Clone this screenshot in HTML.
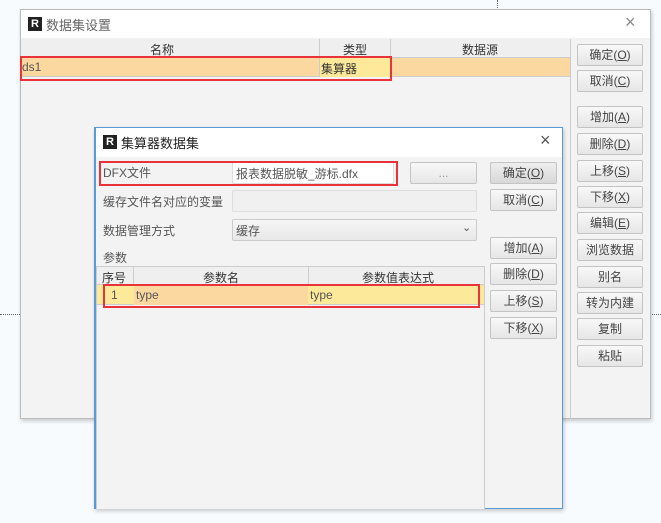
<!DOCTYPE html>
<html><head><meta charset="utf-8"><style>
*{margin:0;padding:0;box-sizing:border-box}
body{width:661px;height:523px;background:#f7fbfd;position:relative;overflow:hidden;font-family:"Liberation Sans","Noto Sans CJK SC",sans-serif;font-size:12px;color:#333}
.a{position:absolute}
.btn{position:absolute;height:22px;border:1px solid #c4c4c4;border-radius:2px;background:linear-gradient(#f8f8f8,#e6e6e6);text-align:center;line-height:20px;font-size:12px;color:#444}
.ic{position:absolute;width:14px;height:14px;background:#222;color:#fff;font-size:11px;font-weight:bold;line-height:14px;text-align:center}
</style></head><body>
<div class="a" style="left:0;top:314px;width:20px;border-top:1px dotted #666"></div>
<div class="a" style="left:650px;top:314px;width:11px;border-top:1px dotted #666"></div>
<div class="a" style="left:497px;top:0;height:10px;border-left:1px dotted #666"></div>

<!-- outer dialog -->
<div class="a" style="left:20px;top:9px;width:631px;height:410px;background:#f3f3f3;border:1px solid #bbb;box-shadow:1px 2px 4px rgba(0,0,0,.2)"></div>
<div class="a" style="left:21px;top:10px;width:629px;height:28px;background:#fff"></div>
<div class="ic" style="left:28px;top:17px">R</div>
<div class="a" style="left:46px;top:15px;font-size:13px;color:#666">数据集设置</div>
<div class="a" style="left:625px;top:12px;font-size:18px;color:#888">×</div>
<div class="a" style="left:21px;top:39px;width:549px;height:19px;background:#efefef;border-bottom:1px solid #ccc"></div>
<div class="a" style="left:319px;top:39px;height:19px;border-left:1px solid #ccc"></div>
<div class="a" style="left:390px;top:39px;height:19px;border-left:1px solid #ccc"></div>
<div class="a" style="left:150px;top:41px">名称</div>
<div class="a" style="left:343px;top:41px">类型</div>
<div class="a" style="left:462px;top:41px">数据源</div>
<div class="a" style="left:570px;top:39px;height:380px;border-left:1px solid #ccc"></div>
<div class="a" style="left:21px;top:58px;width:549px;height:19px;background:#fbd8a0;border-bottom:1px solid #ccc"></div>
<div class="a" style="left:319px;top:58px;width:71px;height:19px;background:#fde99a;border-left:1px solid #ccc"></div>
<div class="a" style="left:22px;top:60px;color:#555">ds1</div>
<div class="a" style="left:321px;top:60px;color:#333">集算器</div>
<div class="a" style="left:20px;top:56px;width:372px;height:25px;border:2px solid #e8333a"></div>
<div class="btn" style="left:577px;top:44px;width:66px">确定(<u>O</u>)</div>
<div class="btn" style="left:577px;top:70px;width:66px">取消(<u>C</u>)</div>
<div class="btn" style="left:577px;top:106px;width:66px">增加(<u>A</u>)</div>
<div class="btn" style="left:577px;top:133px;width:66px">删除(<u>D</u>)</div>
<div class="btn" style="left:577px;top:160px;width:66px">上移(<u>S</u>)</div>
<div class="btn" style="left:577px;top:186px;width:66px">下移(<u>X</u>)</div>
<div class="btn" style="left:577px;top:212px;width:66px">编辑(<u>E</u>)</div>
<div class="btn" style="left:577px;top:239px;width:66px">浏览数据</div>
<div class="btn" style="left:577px;top:266px;width:66px">别名</div>
<div class="btn" style="left:577px;top:292px;width:66px">转为内建</div>
<div class="btn" style="left:577px;top:318px;width:66px">复制</div>
<div class="btn" style="left:577px;top:345px;width:66px">粘贴</div>

<!-- inner dialog -->
<div class="a" style="left:94px;top:127px;width:469px;height:382px;background:#f3f3f3;border:1px solid #5b9bd5;border-left-width:2px;box-shadow:1px 2px 4px rgba(0,0,0,.2)"></div>
<div class="a" style="left:96px;top:128px;width:466px;height:29px;background:#fff"></div>
<div class="ic" style="left:103px;top:135px">R</div>
<div class="a" style="left:121px;top:133px;font-size:13px;color:#222">集算器数据集</div>
<div class="a" style="left:540px;top:130px;font-size:18px;color:#555">×</div>
<div class="a" style="left:103px;top:164px;color:#555">DFX文件</div>
<div class="a" style="left:232px;top:162px;width:162px;height:22px;background:#fff;border:1px solid #ddd;border-radius:2px"></div>
<div class="a" style="left:236px;top:165px;color:#555">报表数据脱敏_游标.dfx</div>
<div class="a" style="left:99px;top:161px;width:299px;height:25px;border:2px solid #e8333a"></div>
<div class="btn" style="left:410px;top:162px;width:67px;color:#999">...</div>
<div class="a" style="left:103px;top:193px;color:#555">缓存文件名对应的变量</div>
<div class="a" style="left:232px;top:190px;width:245px;height:22px;background:#f0f0f0;border:1px solid #ddd;border-radius:2px"></div>
<div class="a" style="left:103px;top:222px;color:#555">数据管理方式</div>
<div class="a" style="left:232px;top:219px;width:245px;height:22px;background:linear-gradient(#f6f6f6,#e8e8e8);border:1px solid #ccc;border-radius:2px"></div>
<div class="a" style="left:236px;top:222px;color:#555">缓存</div>
<div class="a" style="left:462px;top:221px;color:#555;font-size:11px">&#8964;</div>
<div class="a" style="left:103px;top:249px;color:#555">参数</div>
<div class="a" style="left:96px;top:266px;width:389px;height:243px;border:1px solid #ccc;border-bottom:none;background:#f3f3f3"></div>
<div class="a" style="left:97px;top:267px;width:387px;height:18px;background:#efefef;border-bottom:1px solid #ccc"></div>
<div class="a" style="left:133px;top:267px;height:38px;border-left:1px solid #ccc"></div>
<div class="a" style="left:308px;top:267px;height:38px;border-left:1px solid #ccc"></div>
<div class="a" style="left:102px;top:269px">序号</div>
<div class="a" style="left:203px;top:269px">参数名</div>
<div class="a" style="left:362px;top:269px">参数值表达式</div>
<div class="a" style="left:97px;top:285px;width:387px;height:20px;background:#fde99a;border-bottom:1px solid #ccc"></div>
<div class="a" style="left:134px;top:285px;width:174px;height:20px;background:#fbd8a0"></div>
<div class="a" style="left:111px;top:288px;color:#555">1</div>
<div class="a" style="left:136px;top:288px;color:#555">type</div>
<div class="a" style="left:310px;top:288px;color:#555">type</div>
<div class="a" style="left:103px;top:284px;width:377px;height:24px;border:2px solid #e8333a"></div>
<div class="btn" style="left:490px;top:162px;width:67px;background:linear-gradient(#eee,#d8d8d8)">确定(<u>O</u>)</div>
<div class="btn" style="left:490px;top:189px;width:67px">取消(<u>C</u>)</div>
<div class="btn" style="left:490px;top:237px;width:67px">增加(<u>A</u>)</div>
<div class="btn" style="left:490px;top:263px;width:67px">删除(<u>D</u>)</div>
<div class="btn" style="left:490px;top:290px;width:67px">上移(<u>S</u>)</div>
<div class="btn" style="left:490px;top:317px;width:67px">下移(<u>X</u>)</div>
</body></html>
